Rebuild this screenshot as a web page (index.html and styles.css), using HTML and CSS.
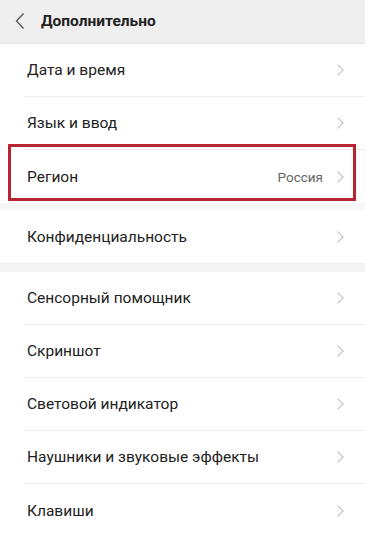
FILE: index.html
```html
<!DOCTYPE html>
<html lang="ru">
<head>
  <meta charset="UTF-8">
  <meta name="viewport" content="width=device-width, initial-scale=1.0">
  <title>Дополнительно</title>
  <link rel="stylesheet" href="styles.css">
</head>
<body>
  <header class="topbar">
    <svg class="back" width="10" height="18" viewBox="0 0 10 18"><path d="M8.5 1.5 L1.5 9 L8.5 16.5" fill="none" stroke="#555" stroke-width="1.3"/></svg>
    <h1>Дополнительно</h1>
  </header>

  <ul class="list">
    <li class="row"><span>Дата и время</span><i class="chev"></i></li>
    <li class="row"><span>Язык и ввод</span><i class="chev"></i></li>
    <li class="row marked"><span>Регион</span><em class="value">Россия</em><i class="chev"></i></li>
  </ul>
  <div class="thin-gap"></div>
  <ul class="list">
    <li class="row"><span>Конфиденциальность</span><i class="chev"></i></li>
  </ul>
  <div class="gap"></div>
  <ul class="list">
    <li class="row"><span>Сенсорный помощник</span><i class="chev"></i></li>
    <li class="row"><span>Скриншот</span><i class="chev"></i></li>
    <li class="row"><span>Световой индикатор</span><i class="chev"></i></li>
    <li class="row"><span>Наушники и звуковые эффекты</span><i class="chev"></i></li>
    <li class="row"><span>Клавиши</span><i class="chev"></i></li>
  </ul>
</body>
</html>
```

FILE: styles.css
```css
body {
  margin: 0;
  font-family: Roboto, "Noto Sans", sans-serif;
  background: #fff;
  color: #222;
  overflow: hidden;
}
.topbar {
  height: 43px;
  background: #efefef;
  border-bottom: 1px solid #e2e2e2;
  display: flex;
  align-items: center;
  padding-left: 15px;
}
.back {
  margin-right: 16px;
  margin-top: -2px;
}
.topbar h1 {
  margin: 0;
  font-size: 15.5px;
  font-weight: bold;
  color: #222;
  margin-top: -1px;
}
.list {
  list-style: none;
  margin: 0;
  padding: 0;
}
.row {
  position: relative;
  height: 53px;
  display: flex;
  align-items: center;
  margin-left: 24px;
  padding-left: 3px;
  padding-right: 19px;
  font-size: 15.5px;
  border-bottom: 1px solid #ededed;
  box-sizing: border-box;
}
.list .row:last-child {
  border-bottom: none;
}
.row span {
  flex: 1;
}
.value {
  font-style: normal;
  font-size: 13.5px;
  color: #666;
  margin-right: 11px;
}
.chev {
  width: 7px;
  height: 7px;
  border-top: 1.2px solid #bdbdbd;
  border-right: 1.2px solid #bdbdbd;
  transform: rotate(45deg);
  margin-right: 4px;
}
.marked::after {
  content: "";
  position: absolute;
  top: -6px;
  bottom: 2px;
  left: -16px;
  right: 9px;
  border: 3px solid #b8242f;
}
.thin-gap {
  height: 7px;
  background: #f6f6f8;
}
.gap {
  height: 8px;
  background: #f4f4f4;
  border-top: 1px solid #efefef;
}
```
